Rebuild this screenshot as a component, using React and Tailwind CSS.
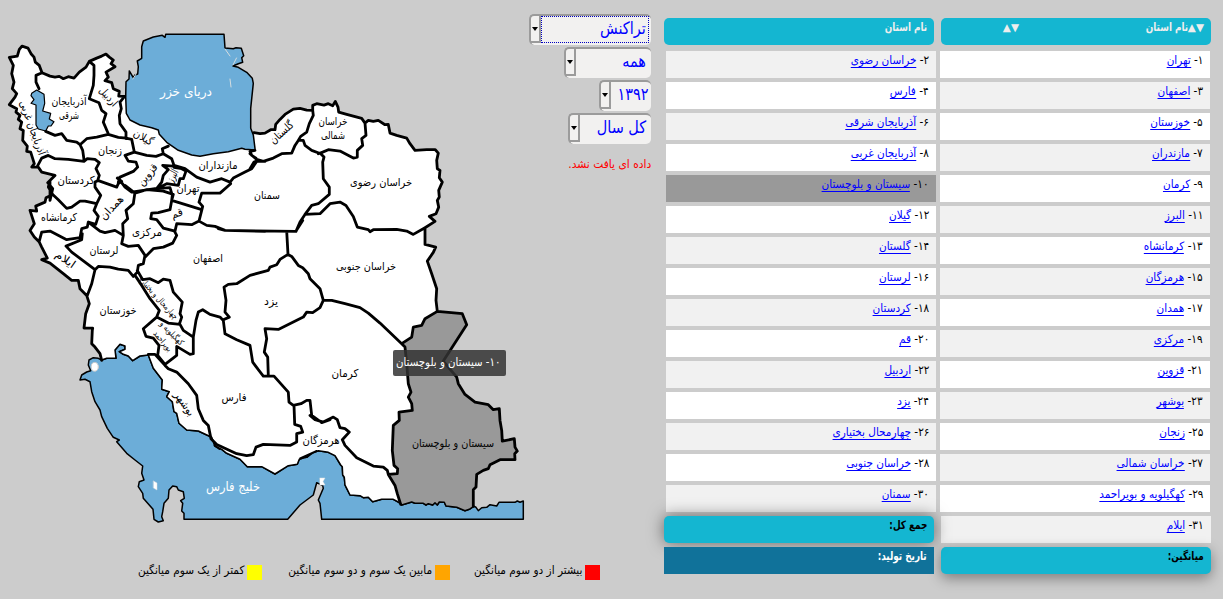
import React from "react";

// Border lines are stored sheet by sheet, at three units per pixel.
const sheets = { A: [0, 25], B: [0, 180], C: [250, 90], D: [130, 220], E: [60, 330], F: [300, 230], G: [300, 370] };
const line = (sheet, text) => {
  const [ox, oy] = sheets[sheet];
  const n = text.trim().split(/[\s,]+/).map(Number);
  const out = [];
  for (let i = 0; i < n.length; i += 2) out.push([ox + n[i] / 3, oy + n[i + 1] / 3]);
  return out;
};
const open = (pts) => "M" + pts.map((p) => p[0].toFixed(1) + " " + p[1].toFixed(1)).join("L");
const closed = (...parts) => open(parts.flat()) + "Z";

const north = line("A", "28,96 52,92 58,72 66,62 84,68 93,85 102,95 106,110 118,120 126,142 150,152 165,155 178,153 190,160 205,154 222,158 238,140 258,125 268,108 290,98 305,92 318,86 328,95 340,104 333,115 345,124 318,140 325,155 315,166 335,172 340,190 358,198 356,212 374,213");
const caspianSouth = line("A", "377,215 379,265 390,285 420,300 455,308 475,315 478,328 500,352 535,376 575,390 600,394 640,386 685,380 725,370 735,373 765,375");
const caspianNorth = line("A", "765,370 760,330 752,310 752,250 760,175 757,160 740,142 715,127 699,123 715,116 728,112 725,98 731,92 724,70 708,68 700,71 675,69 672,28 497,28 495,37 487,31 460,36 430,48 425,65 425,100 412,108 415,125 413,147 405,150 400,158 388,138 387,162 378,170 377,215");
const northEast = line("C", "12,127 30,130 45,128 62,118 75,118 77,102 90,87 105,72 130,56 150,54 170,59 188,60 188,45 200,40 222,44 235,40 248,46 256,33 264,50 266,65 290,72 335,84 345,98 355,90 370,93 385,90 405,103 415,102 420,128 440,135 470,143 480,160 495,180 530,178 556,178 565,188 560,210 562,235 570,240 568,262 577,275 566,300 568,320 562,330 566,350 558,370 538,378 555,393 525,412 525,460");
const eastUpper = line("F", "375,0 375,42 407,50 400,66 382,92 395,130 410,175 408,210 412,243");
const eastLower = [
  ...line("F", "412,243 487,250 500,283 430,392 470,440 475,460 495,492 525,515 565,523 580,538 598,535 600,570 605,600"),
  ...line("G", "607,212 643,205 645,230 652,242 644,250 645,268 600,268 570,283 565,295 550,300 530,312 528,350 520,358 520,408"),
];
const coastSistan = line("G", "520,410 508,418 495,422 470,412 438,408 433,397 418,396 412,405 405,398 398,405 385,401 378,405 370,400 345,400 335,396 305,405");
const coastSouth = [
  ...line("G", "302,402 295,396 280,388 245,388 218,395 205,382 190,383 180,377 150,375 140,355 135,345 133,322 128,315 127,290 122,285 105,257 85,247 55,242 35,250 20,262 0,265"),
  ...line("E", "770,362 740,380 718,388 712,403 685,407 645,432 605,410 562,410 540,388 500,370 485,358 465,348 455,322 415,303 380,300 357,280 350,250 342,245 337,215 320,200 328,185 305,178 307,150 280,115 265,75 240,78 218,92 205,78 190,73 178,65 195,58 195,48 180,43 165,60 168,85 140,85 125,90"),
];
const west = [
  ...line("E", "125,90 120,70 105,50 95,40 97,0"),
  ...line("B", "278,443 252,443 257,400 268,370 260,345 240,325 235,300 215,300 190,280 150,248 125,238 142,233 125,200 118,185 103,170 90,150 103,130 90,90 110,92 107,77 135,65 138,52 158,42 145,20 150,0"),
  ...line("A", "150,525 158,490 143,472 165,450 125,440 115,425 95,425 103,415 92,380 80,378 82,362 68,345 70,315 60,310 65,290 55,282 60,270 48,260 50,250 28,238 45,215 50,205 37,190 42,170 35,145 40,120 28,96"),
];
const gulfEast = line("G", "508,418 520,408 528,412 535,422 545,413 560,412 570,404 590,408 597,397 645,397 652,393 660,397 670,393 670,448 65,448 60,400 55,390 70,355 68,347 50,338 40,375 0,405");
const gulfWest = line("E", "683,568 372,568 372,550 365,543 368,520 362,512 373,505 370,485 355,480 350,470 338,468 327,480 325,505 312,520 308,545 305,560 310,572 295,576 282,568 279,538 250,505 248,490 235,470 238,455 252,450 245,430 248,408 225,390 200,370 170,335 178,330 160,322 142,295 125,260 120,240 105,215 95,185 90,155 75,148 60,150 65,135 80,126 92,122 85,105 87,90 100,83 115,85 125,90");
const sistanWest = [
  ...line("F", "412,243 375,265 365,285 340,290 335,320 305,340 315,350 320,400 325,460 333,485 325,500 335,520 337,540 297,545"),
  ...line("G", "298,150 280,165 277,240 282,285 293,295 292,310 265,312 285,345 292,370 302,402"),
];

const country = closed(north, caspianSouth, northEast, eastUpper, eastLower, coastSistan, coastSouth, west);
const gulf = closed(gulfEast, gulfWest, [...coastSouth].reverse(), [...coastSistan].reverse());
const sistan = closed(eastLower, coastSistan, [...sistanWest].reverse());
const lake = closed(line("A", "95,205 110,195 132,208 134,235 128,258 152,265 148,282 162,290 153,303 145,303 137,318 115,312 108,300 108,240 93,235 102,224 93,212"));

const borders = [
  north, northEast, eastUpper, eastLower, west, sistanWest,
  line("A", "126,142 108,150 108,170 117,190"),
  line("A", "137,318 165,330 185,325 200,345 230,350 240,358 260,340 290,335 325,327 355,336 378,338 395,342 400,365 403,380 375,390 385,407 408,410 413,425 400,438 360,455 355,470"),
  line("A", "268,108 282,120 282,150 280,180 268,220 297,232 305,255 318,265 310,290 325,325"),
  line("A", "372,215 360,230 364,250 358,270 360,295 378,320 378,340"),
  line("A", "240,358 248,375 252,403"),
  line("A", "112,423 125,398 145,390 165,400 205,402 252,408 262,400 285,402 298,412 288,430 298,450 293,465 350,485 355,475 365,468 352,458"),
  line("A", "403,380 440,390 468,393 490,385 487,370 505,362"),
  line("A", "490,385 515,400 522,420 555,430 590,455 630,470 665,460 690,470 700,458 735,440 755,430 770,408 795,408"),
  line("A", "765,375 750,378 755,390 768,398 771,408"),
  line("A", "355,458 375,485 395,500 430,495 465,490 510,487 517,510 515,525"),
  line("A", "520,422 488,420 505,433 490,450 485,470 468,492"),
  line("A", "522,426 545,430 558,437 550,460 540,460 535,480 500,475 470,490"),
  line("B", "690,5 692,10 660,38 605,38 597,65 608,78 597,122 620,135 645,138 675,150 795,153"),
  line("B", "515,60 605,88"),
  line("B", "158,42 175,58 200,84 215,80 240,62 255,62 290,70 302,45 285,20 285,5 295,0"),
  line("B", "405,35 400,70 378,90 383,115 368,130 370,165"),
  line("B", "290,70 282,90 295,108 287,132 265,125 262,140 245,145 240,172 200,178 150,152 125,155 118,182"),
  line("B", "247,160 245,178 198,197 215,215 285,268 295,258 330,260 355,266 385,270 400,288"),
  line("B", "265,125 300,152 315,157 345,150 370,165 365,190 385,198 415,195 435,225 430,250 415,255 412,275 400,288"),
  line("B", "285,268 275,310 262,345"),
  line("B", "375,15 405,38 440,28 490,32 520,42 515,60 510,88 475,97 455,98 452,115 470,118 490,143 525,152 530,130 575,133 597,122"),
  line("B", "522,150 530,165 518,188 490,200 460,205 437,228"),
  line("D", "265,25 285,30 497,33 518,0"),
  line("C", "138,423 150,395 165,372 185,345 205,340 238,312 238,290 220,265 218,215 222,200 212,190 185,180 165,165 160,150 145,150 152,138 170,125 178,100 190,75 188,60"),
  line("C", "145,150 135,165 125,188 95,190 70,203 40,213 20,207 0,190"),
  line("C", "25,210 12,215 0,235"),
  line("C", "205,190 218,185 235,178 270,182 310,203 322,200 322,180 338,165 335,145 348,135 345,98"),
  line("C", "165,372 210,370 240,340 270,335 288,345 310,378 322,410 355,418 360,424 370,418 440,417 470,422 490,432 525,412"),
  line("D", "470,33 474,102 485,108 505,135 518,142 535,160 540,175 555,190 570,205 580,240 570,262 548,277 530,275 520,290 445,327 405,325 410,355 403,395 413,410 415,465"),
  line("D", "474,102 450,117 440,133 420,140 415,150 360,165 320,190 295,192 282,200 288,240 285,275 298,290 280,298"),
  line("D", "190,350 198,300 205,275 218,268 240,282 270,290 280,300 285,340 320,358 360,375 368,425 385,448 400,467 432,467 475,515 477,545 490,555"),
  line("F", "70,210 95,210 135,220 180,232 205,248 240,278 305,340"),
  line("D", "490,555 513,550 530,540 540,540 545,585 575,607 600,598"),
  line("G", "30,135 45,148 70,155 85,147 100,140 112,148 120,172 135,175 148,185 127,208 135,225 170,262 220,287 250,290 262,300 265,312"),
  line("D", "492,555 494,612 512,618 518,635 500,640 500,665 480,675 400,672 378,680 370,703 350,706 320,700 260,672 243,655"),
  line("D", "55,402 75,402 105,435 115,445 140,455 175,490 200,525 205,565 220,600 235,615 243,655"),
  line("D", "15,165 35,195 60,235 88,270 80,290 40,325 48,348 70,353 87,375 83,405 105,432"),
  line("D", "22,150 38,178 60,175 85,187 100,176 120,180 130,215 157,245 150,280 155,290 148,312"),
  line("D", "80,290 115,308 150,312 160,330 190,350 190,400 180,402 140,378 140,405 105,432"),
];

const labels = [
  ["آذربایجان", 69, 105, 35], ["شرقی", 69, 119, 20], ["اردبیل", 108, 100, 22, 48], ["گیلان", 143, 141, 21, 30],
  ["زنجان", 110, 154, 24], ["کردستان", 76, 184, 37], ["قزوین", 148, 178, 25, -50], ["البرز", 173, 179, 13, -62],
  ["مازنداران", 218, 169, 39], ["تهران", 188, 192, 23], ["سمنان", 267, 199, 26], ["گلستان", 282, 136, 28, -42],
  ["خراسان", 333, 125, 29], ["شمالی", 333, 139, 24], ["خراسان رضوی", 381, 186, 62], ["کرمانشاه", 59, 221, 36],
  ["همدان", 112, 211, 29, -47], ["قم", 177, 217, 12, -20], ["مرکزی", 147, 236, 30], ["لرستان", 104, 254, 29],
  ["اصفهان", 208, 262, 30], ["ایلام", 65, 263, 22, 35], ["خوزستان", 118, 314, 37], ["یزد", 271, 305, 14],
  ["خراسان جنوبی", 366, 270, 60], ["کرمان", 345, 377, 27], ["فارس", 234, 401, 25], ["بوشهر", 184, 407, 27, 55],
  ["هرمزگان", 321, 444, 37], ["سیستان و بلوچستان", 453, 447, 82],
];

const odd = ["تهران", "اصفهان", "خوزستان", "مازندران", "کرمان", "البرز", "کرمانشاه", "هرمزگان", "همدان", "مرکزی", "قزوین", "بوشهر", "زنجان", "خراسان شمالی", "کهگیلویه و بویراحمد"];
const even = ["خراسان رضوی", "فارس", "آذربایجان شرقی", "آذربایجان غربی", "سیستان و بلوچستان", "گیلان", "گلستان", "لرستان", "کردستان", "قم", "اردبیل", "یزد", "چهارمحال بختیاری", "خراسان جنوبی", "سمنان"];
const fa = (n) => String(n).replace(/\d/g, (d) => "۰۱۲۳۴۵۶۷۸۹"[d]);

function Label({ text, x, y, w, rotate = 0, size = 11, className = "fill-black" }) {
  return (
    <text x={x} y={y} textAnchor="middle" textLength={w} lengthAdjust="spacingAndGlyphs" fontSize={size} className={className} transform={`rotate(${rotate} ${x} ${y - 3})`}>
      {text}
    </text>
  );
}

function IranMap() {
  return (
    <svg className="block h-[550px] w-[530px]" viewBox="0 0 530 550" strokeLinejoin="round" strokeLinecap="round">
      <path d={gulf} fill="#6cadd8" stroke="#000" strokeWidth="1.5" />
      <path d={closed(caspianSouth, caspianNorth)} fill="#6cadd8" />
      <path d={country} fill="#fff" />
      <path d={sistan} fill="#999" />
      <path d={lake} fill="#6cadd8" stroke="#000" strokeWidth="1.2" />
      <path d={open(coastSouth) + open(coastSistan) + closed(caspianSouth, caspianNorth)} fill="none" stroke="#000" strokeWidth="1.5" />
      <path d={borders.map(open).join("")} transform="translate(0 .4)" fill="none" stroke="#000" strokeWidth="2.8" />
      <path d="M214.5 445.5l5 3.5" stroke="#000" strokeWidth="2" />
      <ellipse cx="94.8" cy="366.8" rx="3.6" ry="4.4" fill="#fff" stroke="#ccc" />
      <path d="M153.500 481l3.500 2v7l-3.500-2zM320 478h5l-2 3.500 2 3.500h-5z" fill="#fff" stroke="#ddd" strokeWidth=".5" />
      <path d="M225 49l5 7M236.5 58l-3.500 7M230 79l1 8M133 79l3-5" stroke="#d5dde0" strokeWidth="1" />
      {labels.map(([text, x, y, w, rotate]) => (
        <Label key={text} text={text} x={x} y={y} w={w} rotate={rotate} />
      ))}
      <Label text="آذربایجان غربی" x={32} y={131} w={57} rotate={70} />
      <Label text="چهارمحال و بختیاری" x={158} y={300} w={56} rotate={48} size={8.5} />
      <Label text="کهگیلویه و" x={172} y={336} w={30} rotate={46} size={8.5} />
      <Label text="بویراحمد" x={163} y={344} w={24} rotate={50} size={8.5} />
      <Label text="دریای خزر" x={186} y={96} w={52} size={13} className="fill-white" />
      <Label text="خلیج فارس" x={233} y={491} w={54} size={13} className="fill-white" />
    </svg>
  );
}

function Select({ width, text, focused }) {
  return (
    <div dir="ltr" className={`${width} flex h-[31px] rounded-[5px] border-t-2 border-l-2 border-[#9b9b9b] bg-[#f2f1f0]`}>
      <div className="mb-[2px] flex w-[10px] shrink-0 items-center justify-center border-r-2 border-b-2 border-[#9b9b9b]">
        <svg className="h-[4px] w-[6px]" viewBox="0 0 6 4"><path d="M0 0h6L3 4z" /></svg>
      </div>
      <div dir="rtl" className={`mr-[2px] mb-[2px] flex-1 border border-dotted pr-[2px] whitespace-nowrap text-[#00f] ${focused ? "border-[#0000c0]" : "border-transparent"}`}>
        <span className="inline-block origin-right scale-x-[0.85] text-[17px] leading-[22px]">{text}</span>
      </div>
    </div>
  );
}

// The digit one is set tighter than the others.
function Num({ n }) {
  return (
    <span className="tracking-[-0.8px]">
      {[...fa(n)].map((d, i) => (
        <span key={i} className={d === "۱" ? "tracking-[-2.8px]" : ""}>{d}</span>
      ))}-
    </span>
  );
}

function Row({ n, name, className }) {
  return (
    <div className={`${className} h-[27px] w-[270px] pr-[7px]`}>
      <span className="inline-block origin-right scale-x-[0.91] text-[11.5px] leading-[19px]">
        <Num n={n} />{" "}
        <span className="border-b border-[#00f] text-[#00f]">{name}</span>
      </span>
    </div>
  );
}

function Bold({ children }) {
  return <span className="inline-block origin-right scale-x-[0.77] text-[11.5px] leading-[18px] font-bold">{children}</span>;
}

function Legend({ color, text, width }) {
  return (
    <div className={`${width} flex items-center gap-[3px]`}>
      <span className={`${color} mt-[3px] size-[15px] shrink-0`} />
      <span className="-mt-[2px] origin-right scale-x-[0.915] text-[11.5px] leading-[16px]">{text}</span>
    </div>
  );
}

export default function App() {
  return (
    <div dir="ltr" className="flex h-[599px] w-[1223px] overflow-hidden bg-[#ccc] font-['DejaVu_Sans',sans-serif] text-[10.5px] text-black">
      <div className="w-[664px] shrink-0">
        <div className="flex h-[562px]">
          <div className="relative w-[530px] shrink-0">
            <IranMap />
            <div dir="rtl" className="absolute top-[350px] left-[393px] h-[26px] w-[113px] rounded-[2px] bg-[#323232]/85 pr-[5px] whitespace-nowrap text-white">
              <span className="inline-block origin-right scale-x-[0.89] text-[11.5px] leading-[25px]"><Num n={10} /> سیستان و بلوچستان</span>
            </div>
          </div>
          <div dir="rtl" className="flex w-[121px] flex-col items-start gap-[2px] pt-[14px]">
            <Select width="w-[122px]" text="تراکنش" focused />
            <Select width="w-[87px]" text="همه" />
            <Select width="w-[52px]" text="۱۳۹۲" />
            <Select width="w-[83px]" text="کل سال" />
            <div className="origin-right scale-x-[0.93] pt-[10px] text-[11.5px] whitespace-nowrap text-[#f00]">داده ای یافت نشد.</div>
          </div>
        </div>
        <div dir="rtl" className="flex pr-[64px] whitespace-nowrap">
          <Legend width="w-[150px]" color="bg-[#f00]" text="بیشتر از دو سوم میانگین" />
          <Legend width="w-[188px]" color="bg-[#ffa500]" text="مابین یک سوم و دو سوم میانگین" />
          <Legend width="w-[130px]" color="bg-[#ff0]" text="کمتر از یک سوم میانگین" />
        </div>
      </div>
      <div dir="rtl" className="flex w-[547px] shrink-0 justify-between pt-[18px] whitespace-nowrap">
        <div className="w-[271px]">
          <div className="mb-[6px] flex h-[27px] w-[270px] rounded-[5px] bg-[#14b6d1] pr-[7px] leading-[18px] font-bold text-[#eee]">
            <span className="flex w-[185px]"><span className="text-[10.5px]">▼▲</span><Bold>نام استان</Bold></span>
            <span>▼▲</span>
          </div>
          <div className="flex flex-col gap-[4px] pr-px">
            {odd.map((name, i) => (
              <Row key={name} n={i * 2 + 1} name={name} className={i % 2 ? "bg-[#f1f1f1]" : "bg-white"} />
            ))}
          </div>
          <div className="mt-[4px] flex flex-col gap-[4px]">
            <Row n={31} name="ایلام" className="bg-[#f1f1f1]" />
            <div className="h-[27px] w-[270px] rounded-[5px] bg-[#14b6d1] pr-[7px] shadow-[0_4px_14px_rgba(0,0,0,0.4)]"><Bold>میانگین:</Bold></div>
          </div>
        </div>
        <div className="w-[272px]">
          <div className="mr-[2px] mb-[6px] h-[27px] w-[270px] rounded-[5px] bg-[#14b6d1] pr-[7px] text-[#eee]"><Bold>نام استان</Bold></div>
          <div className="flex flex-col gap-[4px]">
            {even.map((name, i) => (
              <Row key={name} n={i * 2 + 2} name={name} className={i === 4 ? "bg-[#999]" : i % 2 ? "bg-white" : "bg-[#f1f1f1]"} />
            ))}
          </div>
          <div className="mt-[4px] mr-[2px] flex flex-col gap-[4px]">
            <div className="h-[27px] w-[270px] rounded-[5px] bg-[#14b6d1] pr-[7px] shadow-[0_0_16px_rgba(0,0,0,0.5)]"><Bold>جمع کل:</Bold></div>
            <div className="relative h-[27px] w-[270px] bg-[#10729a] pr-[7px] text-white"><Bold>تاریخ تولید:</Bold></div>
          </div>
        </div>
      </div>
    </div>
  );
}
